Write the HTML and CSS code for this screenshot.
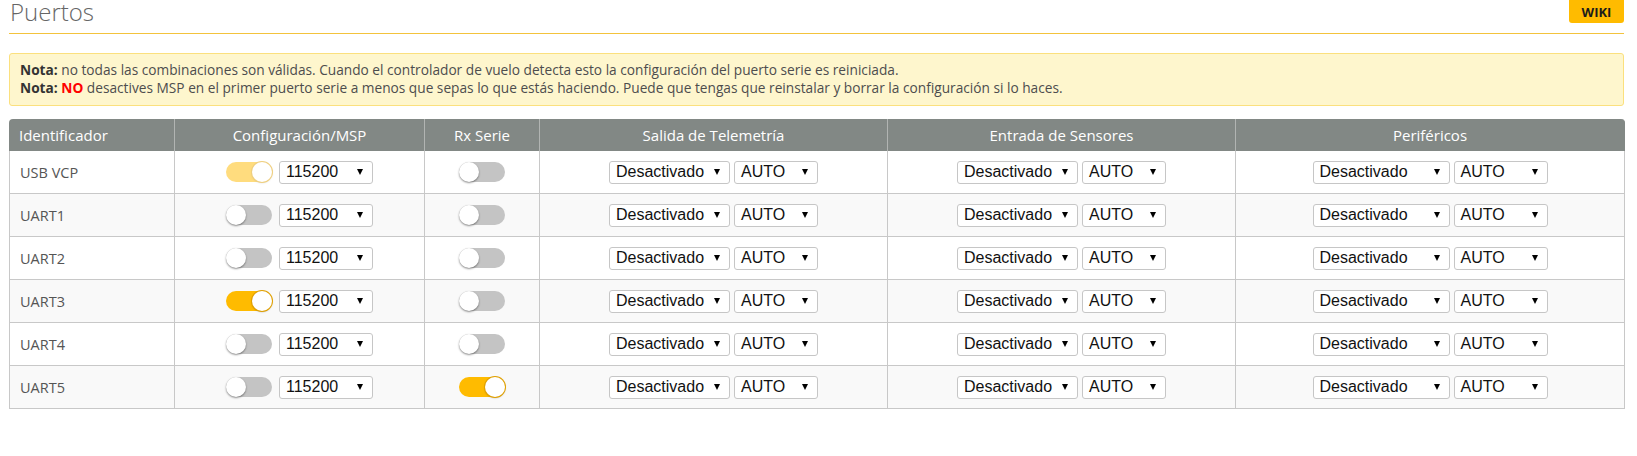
FILE: index.html
```html
<!DOCTYPE html>
<html lang="es">
<head>
<meta charset="utf-8">
<title>Puertos</title>
<link rel="stylesheet" href="styles.css">
</head>
<body>
<div class="tab">
  <div class="tab-head">
    <h1 class="tab-title">Puertos</h1>
    <a class="wiki-btn" href="#">WIKI</a>
  </div>

  <div class="note">
    <p><strong>Nota:</strong> no todas las combinaciones son válidas. Cuando el controlador de vuelo detecta esto la configuración del puerto serie es reiniciada.</p>
    <p><strong>Nota:</strong> <span class="warn">NO</span> desactives MSP en el primer puerto serie a menos que sepas lo que estás haciendo. Puede que tengas que reinstalar y borrar la configuración si lo haces.</p>
  </div>

  <div class="ports">
    <div class="hcell first">Identificador</div>
    <div class="hcell">Configuración/MSP</div>
    <div class="hcell">Rx Serie</div>
    <div class="hcell">Salida de Telemetría</div>
    <div class="hcell">Entrada de Sensores</div>
    <div class="hcell last">Periféricos</div>

    <div class="row">
      <div class="cell ident">USB VCP</div>
      <div class="cell"><span class="switch on locked"></span><span class="select baud">115200</span></div>
      <div class="cell"><span class="switch"></span></div>
      <div class="cell"><span class="select func">Desactivado</span><span class="select auto">AUTO</span></div>
      <div class="cell"><span class="select func">Desactivado</span><span class="select auto">AUTO</span></div>
      <div class="cell"><span class="select func wide">Desactivado</span><span class="select auto wide">AUTO</span></div>
    </div>

    <div class="row alt">
      <div class="cell ident">UART1</div>
      <div class="cell"><span class="switch"></span><span class="select baud">115200</span></div>
      <div class="cell"><span class="switch"></span></div>
      <div class="cell"><span class="select func">Desactivado</span><span class="select auto">AUTO</span></div>
      <div class="cell"><span class="select func">Desactivado</span><span class="select auto">AUTO</span></div>
      <div class="cell"><span class="select func wide">Desactivado</span><span class="select auto wide">AUTO</span></div>
    </div>

    <div class="row">
      <div class="cell ident">UART2</div>
      <div class="cell"><span class="switch"></span><span class="select baud">115200</span></div>
      <div class="cell"><span class="switch"></span></div>
      <div class="cell"><span class="select func">Desactivado</span><span class="select auto">AUTO</span></div>
      <div class="cell"><span class="select func">Desactivado</span><span class="select auto">AUTO</span></div>
      <div class="cell"><span class="select func wide">Desactivado</span><span class="select auto wide">AUTO</span></div>
    </div>

    <div class="row alt">
      <div class="cell ident">UART3</div>
      <div class="cell"><span class="switch on"></span><span class="select baud">115200</span></div>
      <div class="cell"><span class="switch"></span></div>
      <div class="cell"><span class="select func">Desactivado</span><span class="select auto">AUTO</span></div>
      <div class="cell"><span class="select func">Desactivado</span><span class="select auto">AUTO</span></div>
      <div class="cell"><span class="select func wide">Desactivado</span><span class="select auto wide">AUTO</span></div>
    </div>

    <div class="row">
      <div class="cell ident">UART4</div>
      <div class="cell"><span class="switch"></span><span class="select baud">115200</span></div>
      <div class="cell"><span class="switch"></span></div>
      <div class="cell"><span class="select func">Desactivado</span><span class="select auto">AUTO</span></div>
      <div class="cell"><span class="select func">Desactivado</span><span class="select auto">AUTO</span></div>
      <div class="cell"><span class="select func wide">Desactivado</span><span class="select auto wide">AUTO</span></div>
    </div>

    <div class="row alt">
      <div class="cell ident">UART5</div>
      <div class="cell"><span class="switch"></span><span class="select baud">115200</span></div>
      <div class="cell"><span class="switch on"></span></div>
      <div class="cell"><span class="select func">Desactivado</span><span class="select auto">AUTO</span></div>
      <div class="cell"><span class="select func">Desactivado</span><span class="select auto">AUTO</span></div>
      <div class="cell"><span class="select func wide">Desactivado</span><span class="select auto wide">AUTO</span></div>
    </div>
  </div>
</div>
</body>
</html>
```
FILE: styles.css
```css
* {
  box-sizing: border-box;
}

html, body {
  margin: 0;
  background: #fff;
}

body {
  font-family: "Open Sans", "Noto Sans", sans-serif;
  color: #555;
}

.tab {
  padding: 0 13px 0 9px;
}

/* title bar with accent underline */
.tab-head {
  display: flex;
  justify-content: space-between;
  align-items: flex-start;
  height: 34px;
  border-bottom: 1px solid #f3c33c;
}

.tab-title {
  margin: 0 0 0 1px;
  font-size: 24px;
  line-height: 23px;
  font-weight: 300;
  color: #666;
}

.wiki-btn {
  display: flex;
  align-items: center;
  justify-content: center;
  width: 55px;
  height: 23px;
  background: #ffbb00;
  border-radius: 0 0 3px 3px;
  color: #1b1b1b;
  font-size: 13px;
  font-weight: 700;
  text-decoration: none;
}

/* notice box */
.note {
  margin-top: 19px;
  padding: 7px 10px 8px;
  background: #fef6cd;
  border: 1px solid #fbe07e;
  border-radius: 3px;
  font-size: 13.7px;
  line-height: 18px;
  color: #4d4d4d;
}

.note p {
  margin: 0;
}

.note strong {
  color: #333;
}

.note .warn {
  color: #f00;
  font-weight: 700;
}

/* ports grid */
.ports {
  margin-top: 13px;
  display: grid;
  grid-template-columns: 166px 250px 115px 348px 348px 389px;
}

.row {
  display: contents;
}

.hcell {
  height: 32px;
  display: flex;
  align-items: center;
  justify-content: center;
  background: #828885;
  color: #fff;
  font-size: 15px;
  border-right: 1px solid #b1b4b2;
}

.hcell.first {
  justify-content: flex-start;
  padding-left: 10px;
  border-top-left-radius: 4px;
}

.hcell.last {
  border-right-color: #828885;
  border-top-right-radius: 4px;
}

.cell {
  height: 43px;
  display: flex;
  align-items: center;
  justify-content: center;
  gap: 4px;
  background: #fff;
  border-right: 1px solid #c8c8c8;
  border-bottom: 1px solid #c8c8c8;
}

.row.alt .cell {
  background: #f9f9f9;
}

.cell.ident {
  justify-content: flex-start;
  padding-left: 10px;
  border-left: 1px solid #c8c8c8;
  font-size: 14.5px;
  color: #555;
}

/* toggle switch */
.switch {
  position: relative;
  flex: none;
  width: 46px;
  height: 20px;
  margin-right: 3px;
  border-radius: 10px;
  background: #c4c4c4;
}

.switch::before {
  content: "";
  position: absolute;
  left: 0;
  top: 0;
  width: 20px;
  height: 20px;
  border-radius: 50%;
  background: #fff;
  box-shadow: 0 1px 2px rgba(0, 0, 0, 0.45);
}

.switch.on {
  background: #ffbb00;
}

.switch.on::before {
  left: 26px;
  box-shadow: 0 0 0 1px #e0a000, 0 1px 2px rgba(0, 0, 0, 0.3);
}

.switch.locked {
  opacity: 0.5;
}

.cell > .switch:only-child {
  margin-right: 0;
}

/* dropdown look-alike */
.select {
  flex: none;
  display: inline-flex;
  align-items: center;
  justify-content: space-between;
  height: 23px;
  padding: 0 9px 0 6px;
  background: #fff;
  border: 1px solid #c6c6c6;
  border-radius: 3px;
  font-family: "Liberation Sans", Arial, sans-serif;
  font-size: 16px;
  color: #111;
}

.select::after {
  content: "";
  border-left: 3px solid transparent;
  border-right: 3px solid transparent;
  border-top: 6px solid #000;
}

.select.baud {
  width: 94px;
}

.select.func {
  width: 121px;
}

.select.auto {
  width: 84px;
}

.select.func.wide {
  width: 137px;
}

.select.auto.wide {
  width: 94px;
}
```
